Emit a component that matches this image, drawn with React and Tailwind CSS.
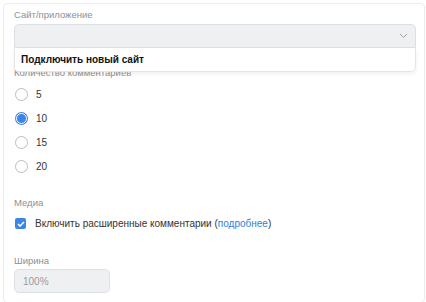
import React, { useState } from "react";

function Radio({ checked, label, onClick }) {
  return (
    <button onClick={onClick} className="flex items-center h-[24px] gap-[8px] pl-[1px] text-left">
      {checked ? (
        <span className="w-[13px] h-[13px] rounded-full bg-[#3d85e6] flex items-center justify-center">
          <span className="w-[11px] h-[11px] rounded-full border-[1.5px] border-white bg-[#3d85e6]" />
        </span>
      ) : (
        <span className="w-[13px] h-[13px] rounded-full border border-[#b9bcc0] bg-white" />
      )}
      <span className="text-[10px] text-[#333]">{label}</span>
    </button>
  );
}

export default function App() {
  const [count, setCount] = useState(10);
  const [extended, setExtended] = useState(true);

  return (
    <div className="min-h-screen bg-white p-[3px] pr-[1px]" style={{ fontFamily: '"Liberation Sans", Arial, sans-serif' }}>
      <div className="h-[300px] border border-[#ececec] rounded-[4px] bg-white pl-[10px] pr-[8px] pt-[4px]">
        {/* Site / app */}
        <div className="text-[9.5px] text-[#909090] leading-[14px]">Сайт/приложение</div>
        <div className="relative mt-[2px]">
          <div className="h-[24px] bg-[#eff0f2] border border-[#dcdfe3] rounded-t-[5px] flex items-center justify-end pr-[7px]">
            <svg width="9" height="6" viewBox="0 0 9 6" fill="none">
              <path d="M1 1l3.5 3.5L8 1" stroke="#9aa0a6" strokeWidth="1" />
            </svg>
          </div>
          <div className="absolute left-0 right-0 top-[24px] h-[24px] bg-white border border-t-0 border-[#e3e5e8] rounded-b-[5px] shadow-[0_2px_4px_rgba(0,0,0,0.06)] flex items-center pl-[6px] z-10">
            <span className="text-[10px] font-bold text-[#111]">Подключить новый сайт</span>
          </div>
        </div>

        {/* Count */}
        <div className="mt-[18px] text-[9.5px] text-[#909090] leading-[14px]">Количество комментариев</div>
        <div className="mt-[2px] flex flex-col">
          {[5, 10, 15, 20].map((n) => (
            <Radio key={n} checked={count === n} label={n} onClick={() => setCount(n)} />
          ))}
        </div>

        {/* Media */}
        <div className="mt-[18px] text-[9.5px] text-[#909090] leading-[14px]">Медиа</div>
        <button onClick={() => setExtended(!extended)} className="mt-[6px] h-[15px] flex items-center gap-[9px] pl-[1px] text-left">
          <span className={`w-[11px] h-[11px] rounded-[2px] flex items-center justify-center ${extended ? "bg-[#3d85e6]" : "border border-[#b9bcc0]"}`}>
            {extended && (
              <svg width="8" height="6" viewBox="0 0 8 6" fill="none">
                <path d="M1 3l2 2 4-4" stroke="white" strokeWidth="1.5" />
              </svg>
            )}
          </span>
          <span className="text-[10px] text-[#333]">
            Включить расширенные комментарии (<span className="text-[#2f7fd8]">подробнее</span>)
          </span>
        </button>

        {/* Width */}
        <div className="mt-[23px] text-[9.5px] text-[#909090] leading-[14px]">Ширина</div>
        <div className="mt-[1px] w-[96px] h-[24px] bg-[#eff0f2] border border-[#dcdfe3] rounded-[5px] flex items-center pl-[8px] text-[10px] text-[#9a9a9a]">
          100%
        </div>
      </div>
    </div>
  );
}
